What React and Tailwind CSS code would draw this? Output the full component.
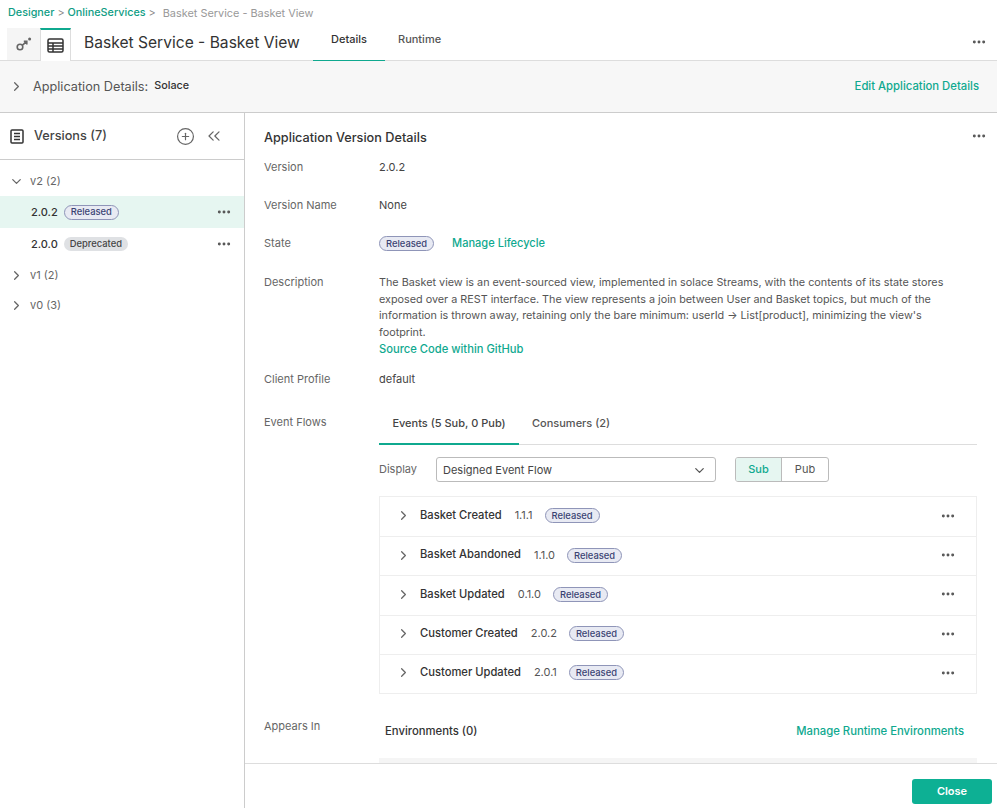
import { ChevronRight, ChevronDown, ChevronsLeft, CirclePlus, MoreHorizontal } from 'lucide-react';

const events = [
  { name: 'Basket Created', version: '1.1.1' },
  { name: 'Basket Abandoned', version: '1.1.0' },
  { name: 'Basket Updated', version: '0.1.0' },
  { name: 'Customer Created', version: '2.0.2' },
  { name: 'Customer Updated', version: '2.0.1' },
];

function Released() {
  return (
    <span className="inline-flex h-[15px] items-center rounded-full border border-[#8f95b8] bg-[#e8eaf3] px-[6px] text-[9.4px] font-medium leading-none text-[#3a4372]">
      Released
    </span>
  );
}

function Dots() {
  return <MoreHorizontal size={16} strokeWidth={2.4} className="text-[#555]" />;
}

function Row({ label, children, className = '', labelClass = '' }) {
  return (
    <div className={`flex ${className}`}>
      <div className={`w-[115px] shrink-0 text-[#666] ${labelClass}`}>{label}</div>
      <div className="min-w-0 flex-1">{children}</div>
    </div>
  );
}

export default function App() {
  return (
    <div className="flex h-[808px] w-[997px] flex-col overflow-hidden bg-white font-['Inter',sans-serif] text-[11px] text-[#444]">
      <div className="flex h-[25px] items-center pl-2 pt-[2px] text-[10.8px] text-[#888]">
        <span className="font-medium text-[#0f9d84]">Designer</span>
        <span className="mx-[3px]">&gt;</span>
        <span className="font-medium text-[#0f9d84]">OnlineServices</span>
        <span className="ml-[3px] mr-[7px]">&gt;</span>
        <span className="text-[10.9px] text-[#999]">Basket Service - Basket View</span>
      </div>

      <div className="flex h-[36px] border-b border-[#ddd]">
        <div className="ml-[7px] mt-[3px] flex w-[33px] items-center justify-center bg-[#f5f5f5]">
          <svg width="16" height="14" viewBox="0 0 16 14" fill="none" stroke="#666" strokeWidth="1.6">
            <circle cx="4" cy="10" r="2.8" />
            <path d="M6.4 8.2 10.6 4.6M7.8 4.4h3v3" />
            <circle cx="13.6" cy="2" r="1.5" fill="#666" stroke="none" />
          </svg>
        </div>
        <div className="-mb-px mt-[3px] flex w-[31px] items-center justify-center border-x border-t-2 border-[#ddd] border-t-[#0fa98f] bg-white">
          <svg width="17" height="15" viewBox="0 0 17 15" fill="none" stroke="#333" strokeWidth="1.5">
            <rect x="1" y="1" width="15" height="13" rx="1.5" />
            <path d="M1 5h15M1 8h15M1 11h15M6 5v9" />
          </svg>
        </div>
        <div className="ml-[13px] flex w-[216px] items-center whitespace-nowrap text-[15.6px] text-[#333]">
          Basket Service - Basket View
        </div>
        <div className="ml-[13px] flex h-[36px] w-[72px] items-center justify-center border-b border-[#0fa98f] pb-[6px] font-medium text-[#333]">
          Details
        </div>
        <div className="ml-[13px] flex h-[36px] items-center pb-[7px] font-medium text-[#555]">Runtime</div>
        <div className="ml-auto mr-[10px] flex items-center pb-[2px]">
          <Dots />
        </div>
      </div>

      <div className="flex h-[52px] items-center border-b border-[#ccc] bg-[#f7f7f7] pl-[9px] pr-[18px]">
        <ChevronRight size={15} className="text-[#666]" />
        <span className="ml-[9px] text-[12.7px] text-[#555]">Application Details:</span>
        <span className="ml-[6px] pb-[1px] text-[10.8px] font-medium text-[#333]">Solace</span>
        <span className="ml-auto text-[11.3px] font-medium text-[#0fa98f]">Edit Application Details</span>
      </div>

      <div className="flex min-h-0 flex-1">
        <aside className="w-[245px] shrink-0 border-r border-[#ccc]">
          <div className="flex h-[47px] items-center border-b border-[#ccc] pl-[10px]">
            <svg width="14" height="15" viewBox="0 0 14 15" fill="none" stroke="#333" strokeWidth="1.5">
              <rect x="1" y="1" width="12" height="13" rx="1" />
              <path d="M4 4.5h6M4 7.5h6M4 10.5h6" />
            </svg>
            <span className="ml-[10px] text-[12.7px] font-medium">Versions (7)</span>
            <CirclePlus size={19} strokeWidth={1.5} className="ml-[69px] text-[#666]" />
            <ChevronsLeft size={20} strokeWidth={1.5} className="ml-[9px] text-[#666]" />
          </div>
          <div className="flex h-[36px] items-center pl-[9px] pt-[6px] text-[#666]">
            <ChevronDown size={15} />
            <span className="ml-[6px]">v2 (2)</span>
          </div>
          <div className="flex h-[32px] items-center bg-[#e6f6f1] pl-[31px] pr-[12px]">
            <span className="font-medium text-[#333]">2.0.2</span>
            <span className="ml-[6px] flex">
              <Released />
            </span>
            <span className="ml-auto">
              <Dots />
            </span>
          </div>
          <div className="flex h-[32px] items-center pl-[31px] pr-[12px]">
            <span className="font-medium text-[#333]">2.0.0</span>
            <span className="ml-[6px] inline-flex h-[14px] items-center rounded-full bg-[#dfe1e4] px-[6px] text-[9.4px] font-medium text-[#444]">
              Deprecated
            </span>
            <span className="ml-auto">
              <Dots />
            </span>
          </div>
          <div className="flex h-[31px] items-center pl-[9px] text-[#666]">
            <ChevronRight size={15} />
            <span className="ml-[6px]">v1 (2)</span>
          </div>
          <div className="flex h-[28px] items-center pl-[9px] text-[#666]">
            <ChevronRight size={15} />
            <span className="ml-[6px]">v0 (3)</span>
          </div>
        </aside>

        <main className="relative min-w-0 flex-1 pl-[19px] pr-[20px]">
          <div className="flex h-[46px] items-center">
            <span className="mt-[3px] text-[12.7px] font-medium text-[#333]">Application Version Details</span>
            <span className="ml-auto -mr-[10px]">
              <Dots />
            </span>
          </div>
          <Row label="Version" className="h-[38px]">2.0.2</Row>
          <Row label="Version Name" className="h-[38px]">None</Row>
          <Row label="State" className="h-[39px]">
            <div className="flex items-center gap-[18px]">
              <Released />
              <span className="text-[11.05px] font-medium text-[#0fa98f]">Manage Lifecycle</span>
            </div>
          </Row>
          <Row label="Description" className="h-[97px]">
            <p className="w-[590px] pt-[1px] text-[10.8px] leading-[16.5px] text-[#555]">
              The Basket view is an event-sourced view, implemented in solace Streams, with the contents of its state
              stores exposed over a REST interface. The view represents a join between User and Basket topics, but much
              of the information is thrown away, retaining only the bare minimum: userId → List[product], minimizing the
              view's footprint.
            </p>
            <span className="text-[11.2px] font-medium leading-[15px] text-[#0fa98f]">Source Code within GitHub</span>
          </Row>
          <Row label="Client Profile" className="h-[37px]">default</Row>
          <Row label="Event Flows" labelClass="pt-[6px]">
            <div className="flex h-[37px] border-b border-[#ddd]">
              <div className="flex h-[37px] w-[140px] items-center justify-center border-b-2 border-[#0fa98f] pb-[5px] font-medium">
                Events (5 Sub, 0 Pub)
              </div>
              <div className="ml-[13px] flex items-center pb-[5px] font-medium text-[#555]">Consumers (2)</div>
            </div>
            <div className="mt-[12px] flex items-center">
              <span className="w-[57px] text-[#666]">Display</span>
              <div className="flex h-[25px] w-[280px] items-center justify-between rounded-[3px] border border-[#bbb] pl-[6px] pr-[8px] pt-[1px] text-[#444]">
                Designed Event Flow
                <ChevronDown size={15} className="text-[#555]" />
              </div>
              <div className="ml-[19px] flex h-[25px] w-[94px] overflow-hidden rounded-[3px] border border-[#bbb]">
                <div className="flex w-[46px] items-center justify-center border-r border-[#bbb] bg-[#e6f6f1] font-medium text-[#0fa98f]">
                  Sub
                </div>
                <div className="flex flex-1 items-center justify-center text-[#555]">Pub</div>
              </div>
            </div>
            <div className="mt-[14px] border border-[#eee]">
              {events.map((e, i) => (
                <div
                  key={e.name}
                  className={`flex h-[39.2px] items-center pb-[2px] pl-[16px] pr-[20px] ${i > 0 ? 'border-t border-[#eee]' : ''}`}
                >
                  <ChevronRight size={15} className="text-[#666]" />
                  <span className="ml-[9px] pb-[1px] text-[11.2px] font-medium text-[#333]">{e.name}</span>
                  <span className="ml-[13px] mr-[12px] pb-[1px] text-[#555]">{e.version}</span>
                  <Released />
                  <span className="ml-auto">
                    <Dots />
                  </span>
                </div>
              ))}
            </div>
          </Row>
          <Row label="Appears In" className="mt-[24px]">
            <div className="flex items-center justify-between px-[6px] pr-[13px] pt-[5px]">
              <span className="text-[11.3px] font-medium text-[#333]">Environments (0)</span>
              <span className="text-[11.3px] font-medium text-[#0fa98f]">Manage Runtime Environments</span>
            </div>
          </Row>
          <div className="absolute bottom-[45px] left-[134px] right-[20px] h-[5px] bg-[#f5f5f5]" />
          <div className="absolute inset-x-0 bottom-0 flex h-[45px] items-start justify-end border-t border-[#ddd] bg-white pr-[5px] pt-[15px]">
            <button className="h-[25px] w-[80px] rounded-[3px] bg-[#0db094] text-[11px] font-semibold text-white">
              Close
            </button>
          </div>
        </main>
      </div>
    </div>
  );
}
